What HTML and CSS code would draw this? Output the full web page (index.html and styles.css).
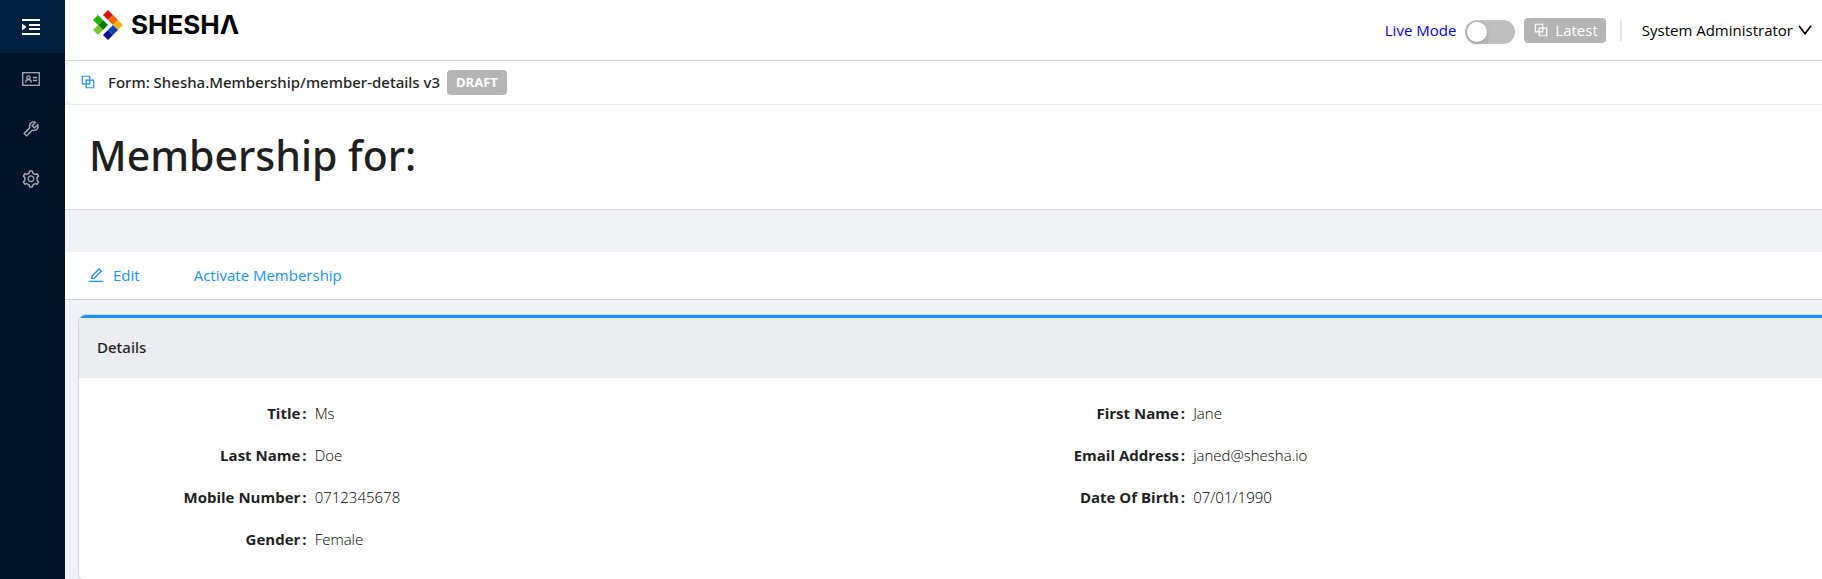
FILE: index.html
```html
<!DOCTYPE html>
<html lang="en">
<head>
<meta charset="utf-8">
<meta name="viewport" content="width=device-width, initial-scale=1">
<title>Membership details</title>
<link rel="stylesheet" href="styles.css">
</head>
<body>
<svg class="sprite" aria-hidden="true">
  <symbol id="block" viewBox="0 0 1024 1024"><path d="M856 376H648V168c0-8.800-7.200-16-16-16H168c-8.800 0-16 7.200-16 16v464c0 8.800 7.200 16 16 16h208v208c0 8.800 7.200 16 16 16h464c8.800 0 16-7.200 16-16V392c0-8.800-7.200-16-16-16zm-480 16v188H220V220h360v156H392c-8.800 0-16 7.200-16 16zm204 52v136H444V444h136zm224 360H444V648h188c8.800 0 16-7.200 16-16V444h156v360z"/></symbol>
</svg>
<div class="app">
  <nav class="sidebar" aria-label="Main">
    <button class="side-toggle" type="button" aria-label="Expand menu">
      <svg width="18" height="16" viewBox="0 0 18 16" fill="currentColor"><path d="M0 0h18v2H0zM7 5h11v2H7zM7 9h11v2H7zM0 14h18v2H0zM0 4.500v7L4.500 8z"/></svg>
    </button>
    <a class="side-link" href="#members" aria-label="Members">
      <svg width="18" height="14" viewBox="0 0 18 14" fill="none" stroke="currentColor" stroke-width="1.300"><rect x=".7" y=".7" width="16.600" height="12.600"/><circle cx="6.500" cy="5.600" r="1.700"/><path d="M3.600 10.500c.2-2 1.300-3 2.900-3s2.700 1 2.900 3M11 5.500h4M11 8.500h4"/></svg>
    </a>
    <a class="side-link" href="#tools" aria-label="Configuration">
      <svg width="20" height="20" viewBox="0 0 1024 1024" fill="currentColor"><path d="M876.600 239.500c-.5-.9-1.200-1.800-2-2.500-5-5-13.100-5-18.100 0L684.200 409.300l-67.900-67.900L788.700 169c.8-.8 1.400-1.600 2-2.500 3.600-6.100 1.600-13.900-4.500-17.500-98.200-58-226.800-44.700-311.300 39.700-67 67-89.200 162-66.500 247.400l-293 293c-3 3-2.800 7.900.3 11l169.700 169.700c3.100 3.100 8.100 3.300 11 .3l292.900-292.900c85.500 22.800 180.500.7 247.600-66.400 84.400-84.500 97.700-213.100 39.700-311.300zM786 499.800c-58.100 58.100-145.300 69.300-214.600 33.600l-8.800 8.800-.1-.1-274 274.100-79.200-79.200 230.100-230.100s0 .1.100.1l52.800-52.800c-35.700-69.300-24.500-156.500 33.600-214.600a184.200 184.200 0 01144-53.500L537 318.900a32.050 32.050 0 000 45.300l124.500 124.500a32.050 32.050 0 0045.300 0l132.800-132.800c3.700 51.800-14.400 104.800-53.600 143.900z"/></svg>
    </a>
    <a class="side-link" href="#settings" aria-label="Settings">
      <svg width="20" height="20" viewBox="0 0 1024 1024" fill="currentColor"><path d="M924.800 625.700l-65.500-56c3.100-19 4.700-38.400 4.700-57.800s-1.600-38.800-4.700-57.800l65.500-56a32.030 32.030 0 009.300-35.200l-.9-2.600a443.740 443.740 0 00-79.700-137.900l-1.800-2.100a32.120 32.120 0 00-35.100-9.500l-81.300 28.900c-30-24.600-63.500-44-99.700-57.600l-15.700-85a32.050 32.050 0 00-25.800-25.700l-2.700-.5c-52.100-9.400-106.900-9.400-159 0l-2.700.5a32.050 32.050 0 00-25.800 25.700l-15.800 85.400a351.860 351.860 0 00-99 57.400l-81.900-29.100a32 32 0 00-35.100 9.500l-1.800 2.100a446.020 446.020 0 00-79.700 137.900l-.9 2.600c-4.500 12.500-.8 26.500 9.300 35.200l66.300 56.600c-3.100 18.800-4.600 38-4.600 57.100 0 19.200 1.500 38.400 4.600 57.100L99 625.500a32.030 32.030 0 00-9.300 35.200l.9 2.600c18.100 50.400 44.900 96.900 79.700 137.900l1.800 2.100a32.120 32.120 0 0035.100 9.500l81.900-29.100c29.800 24.500 63.100 43.900 99 57.400l15.800 85.400a32.050 32.050 0 0025.800 25.700l2.700.5a449.400 449.400 0 00159 0l2.700-.5a32.050 32.050 0 0025.800-25.700l15.700-85a350 350 0 0099.700-57.600l81.300 28.900a32 32 0 0035.100-9.500l1.800-2.100c34.800-41.100 61.600-87.500 79.700-137.900l.9-2.600c4.500-12.300.8-26.300-9.300-35zM788.300 465.900c2.500 15.100 3.800 30.600 3.800 46.100s-1.300 31-3.800 46.100l-6.600 40.100 74.700 63.900a370.030 370.030 0 01-42.600 73.600L721 702.800l-31.400 25.800c-23.900 19.600-50.500 35-79.300 45.800l-38.100 14.300-17.900 97a377.500 377.500 0 01-85 0l-17.900-97.200-37.800-14.500c-28.500-10.800-55-26.200-78.700-45.700l-31.400-25.900-93.400 33.200c-17-22.900-31.200-47.600-42.600-73.600l75.500-64.500-6.500-40c-2.400-14.900-3.700-30.300-3.700-45.500 0-15.300 1.200-30.600 3.700-45.500l6.500-40-75.500-64.500c11.300-26.100 25.600-50.700 42.600-73.600l93.400 33.200 31.400-25.900c23.700-19.500 50.200-34.900 78.700-45.700l37.900-14.300 17.900-97.200c28.100-3.200 56.800-3.200 85 0l17.900 97 38.100 14.300c28.700 10.800 55.400 26.200 79.300 45.800l31.400 25.800 92.800-32.900c17 22.900 31.200 47.600 42.600 73.600L781.800 426l6.500 39.900zM512 326c-97.200 0-176 78.800-176 176s78.800 176 176 176 176-78.800 176-176-78.800-176-176-176zm79.200 255.200A111.600 111.600 0 01512 614c-29.900 0-58-11.700-79.200-32.800A111.600 111.600 0 01400 502c0-29.900 11.700-58 32.800-79.200C454 401.600 482.100 390 512 390c29.900 0 58 11.600 79.200 32.800A111.600 111.600 0 01624 502c0 29.900-11.700 58-32.800 79.200z"/></svg>
    </a>
  </nav>
  <div class="main">
    <header class="topbar">
      <a class="brand" href="#home" aria-label="Shesha home">
        <svg width="30" height="30" viewBox="0 0 30 30">
          <path fill="#d71515" d="M15 0l5 5-5 5-5-5z"/><path fill="#ff6600" d="M20 5l5 5-5 5-5-5z"/><path fill="#ffb40a" d="M25 10l5 5-5 5-5-5z"/><path fill="#0a46b4" d="M20 15l5 5-5 5-5-5z"/><path fill="#000f8c" d="M15 20l5 5-5 5-5-5z"/><path fill="#23b414" d="M5 5l5 5-5 5-5-5z"/><path fill="#007d00" d="M10 10l5 5-5 5-5-5z"/><path fill="#7dc832" d="M5 15l5 5-5 5-5-5z"/>
        </svg>
        <span class="wordmark">SHESHΛ</span>
      </a>
      <div class="top-actions">
        <label class="mode" for="live-mode">Live Mode</label>
        <input class="switch" id="live-mode" type="checkbox" role="switch">
        <button class="tag tag-latest" type="button"><svg class="icon" width="18" height="18"><use href="#block"/></svg>Latest</button>
        <span class="divider"></span>
        <button class="user" type="button">System Administrator
          <svg width="14" height="10" viewBox="0 0 14 10" fill="none" stroke="currentColor" stroke-width="1.700"><path d="M1 .7l6 8 6-8"/></svg>
        </button>
      </div>
    </header>
    <div class="formbar-wrap">
      <div class="formbar">
        <svg class="icon form-icon" width="18" height="18"><use href="#block"/></svg>
        <span class="form-name">Form: Shesha.Membership/member-details v3</span>
        <span class="tag tag-draft">DRAFT</span>
      </div>
    </div>
    <div class="title-area"><h1>Membership for:</h1></div>
    <div class="toolbar">
      <button class="action" type="button"><svg width="18" height="18" viewBox="0 0 1024 1024" fill="currentColor"><path d="M257.700 752c2 0 4-.2 6-.5L431.900 722c2-.4 3.900-1.300 5.300-2.800l423.900-423.900a9.960 9.960 0 000-14.100L694.900 114.900c-1.900-1.900-4.400-2.900-7.100-2.900s-5.200 1-7.100 2.900L256.800 538.800c-1.500 1.500-2.400 3.300-2.800 5.300l-29.500 168.200a33.500 33.500 0 009.400 29.800c6.600 6.400 14.900 9.900 23.800 9.900zm67.400-174.400L687.800 215l73.300 73.300-362.700 362.600-88.900 15.700 15.600-89zM880 836H144c-17.700 0-32 14.300-32 32v36c0 4.400 3.600 8 8 8h784c4.400 0 8-3.600 8-8v-36c0-17.700-14.300-32-32-32z"/></svg>Edit</button>
      <button class="action" type="button">Activate Membership</button>
    </div>
    <section class="card">
      <h2 class="card-head">Details</h2>
      <dl class="fields">
        <div class="field"><dt>Title<span class="colon">:</span></dt><dd>Ms</dd></div>
        <div class="field"><dt>First Name<span class="colon">:</span></dt><dd>Jane</dd></div>
        <div class="field"><dt>Last Name<span class="colon">:</span></dt><dd>Doe</dd></div>
        <div class="field"><dt>Email Address<span class="colon">:</span></dt><dd>janed@shesha.io</dd></div>
        <div class="field"><dt>Mobile Number<span class="colon">:</span></dt><dd>0712345678</dd></div>
        <div class="field"><dt>Date Of Birth<span class="colon">:</span></dt><dd>07/01/1990</dd></div>
        <div class="field"><dt>Gender<span class="colon">:</span></dt><dd>Female</dd></div>
      </dl>
    </section>
  </div>
</div>
</body>
</html>
```
FILE: styles.css
```css
* { box-sizing: border-box; }
body { margin: 0; font-family: "Open Sans", "Noto Sans", sans-serif; font-size: 15px; line-height: 24px; color: #1f1f1f; }
button { font: inherit; border: 0; background: none; padding: 0; cursor: pointer; }
svg { display: block; flex: none; }
h1, h2, dl, dd { margin: 0; }
.sprite { position: absolute; width: 0; height: 0; }
.icon { fill: currentColor; }

.app { display: flex; height: 100vh; overflow: hidden; }
.main { flex: 1; min-width: 0; overflow: hidden; background: #f0f1f5; }

.sidebar { width: 65px; flex: none; background: #001529; color: #a6adb4; display: flex; flex-direction: column; }
.side-toggle { height: 53px; width: 100%; margin-bottom: 1px; background: #002140; color: #fff; display: flex; align-items: center; padding-left: 22px; }
.side-link { height: 50px; padding-right: 3px; display: flex; align-items: center; justify-content: center; color: inherit; }

.topbar { height: 61px; background: #fff; border-bottom: 1px solid #d3d3d3; display: flex; justify-content: space-between; padding: 0 10px 0 28px; }
.brand { display: flex; gap: 8px; height: 50px; align-items: center; color: #000; text-decoration: none; }
.wordmark { font: 700 26px/30px Inter, sans-serif; }
.top-actions { display: flex; align-items: center; }
.mode { color: #00f; }
.switch { appearance: none; width: 50px; height: 24px; margin: 4px 9px 0; border-radius: 12px; background: #bfbfbf; display: flex; padding: 2px; cursor: pointer; }
.switch::before { content: ""; width: 20px; height: 20px; border-radius: 50%; background: #fff; box-shadow: 0 2px 4px rgba(0, 35, 11, .2); }
.switch:checked { background: #1890ff; justify-content: flex-end; }
.tag { height: 25px; background: #b4b4b4; color: #fff; border-radius: 4px; display: flex; align-items: center; }
.tag-latest { padding: 0 8px; gap: 5px; }
.divider { width: 2px; height: 21px; margin: 0 20px 0 14px; background: #e4e4e4; }
.user { display: flex; align-items: center; gap: 5px; color: #000; }

.formbar-wrap { background: #f0f1f2; border-bottom: 1px solid #ededee; }
.formbar { height: 43px; background: #fff; border-radius: 8px 0 0 8px; display: flex; align-items: center; margin-left: 1px; padding: 0 0 1px 13px; }
.form-icon { color: #1890ff; }
.form-name { margin: 0 7px 0 11px; font-family: "Noto Sans", sans-serif; font-weight: 500; }
.tag-draft { padding: 0 9px; font-size: 13px; font-weight: 700; }

.title-area { height: 105px; padding: 18px 24px; background: #fff; border-bottom: 1px solid #d3d3d3; }
h1 { font-family: "Noto Sans", sans-serif; font-size: 41px; line-height: 64px; font-weight: 500; }

.toolbar { height: 48px; margin-top: 42px; padding: 0 22px 2px; background: #fff; border-bottom: 1px solid #d3d3d3; display: flex; align-items: center; gap: 54px; }
.action { display: flex; align-items: center; gap: 8px; color: #1890ff; }

/* The card is wider than the viewport and is clipped by .main. */
.card { margin: 14px -47px 0 13px; background: #fff; border: 1px solid #d3d3d3; border-radius: 8px; overflow: hidden; }
.card-head { height: 63px; padding: 14px 18px 0; border-top: 3px solid #1890ff; background: #ebecf0; font-family: "Noto Sans", sans-serif; font-size: 15px; line-height: 30px; font-weight: 500; }
.fields { display: grid; grid-template-columns: 1fr 1fr; row-gap: 18px; padding: 23px 16px 29px; }
.field { display: grid; grid-template-columns: 1fr 3fr; }
dt { font-weight: 700; text-align: right; padding-right: 8px; }
dd { font-weight: 300; color: #000; }
.colon { margin-left: 2px; }
```
